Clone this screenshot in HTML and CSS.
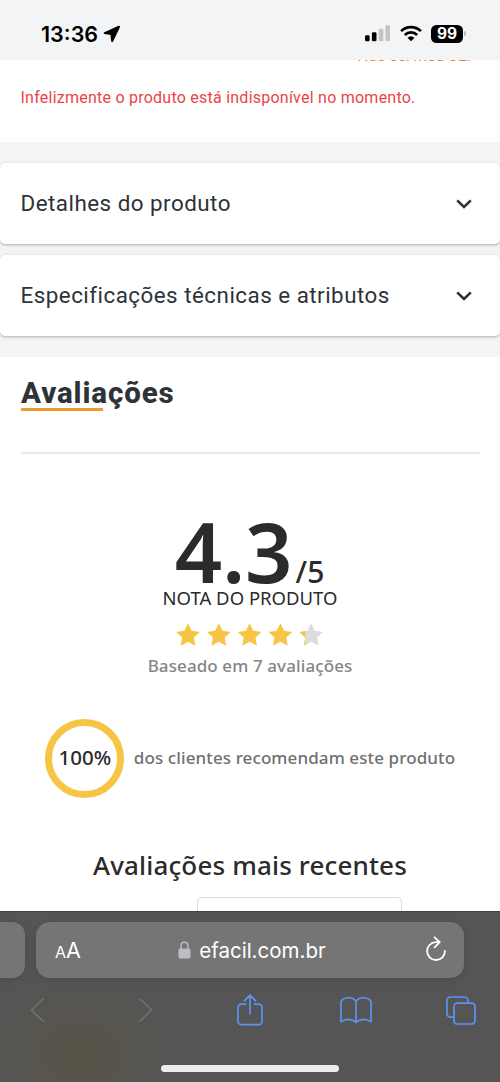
FILE: index.html
```html
<!DOCTYPE html>
<html lang="pt-BR">
<head>
<meta charset="utf-8">
<title>Avaliações</title>
<link rel="stylesheet" href="styles.css">
</head>
<body>
<header class="status">
  <div class="status-left">
    <span class="clock">13:36</span>
    <svg class="location" width="18" height="18" viewBox="0 0 18 18"><path d="M16 1.7 1.7 8.1l6.6.9.9 7Z" stroke="#000" stroke-width="2" stroke-linejoin="round"/></svg>
  </div>
  <div class="status-right">
    <svg width="26" height="17" viewBox="0 0 26 17"><rect x="0" y="10.3" width="4.6" height="6" rx="1.3"/><rect x="6.9" y="7.2" width="4.6" height="9.1" rx="1.3"/><g fill="#c3c4c5"><rect x="13.7" y="3.7" width="4.6" height="12.6" rx="1.3"/><rect x="20.4" y=".3" width="4.6" height="16" rx="1.3"/></g></svg>
    <svg class="wifi" width="22" height="17" viewBox="0 0 22 17"><g fill="none" stroke="#000" stroke-width="2.7"><path d="M1.1 6.1a14.3 14.3 0 0 1 19.8 0"/><path d="M4.8 9.9a9.1 9.1 0 0 1 12.4 0"/></g><path d="m11 16.3-3.5-3.5a5.2 5.2 0 0 1 7 0Z"/></svg>
    <span class="battery">99</span><i class="battery-tip"></i>
  </div>
</header>

<main class="page">
  <section class="notice">
    <a class="cep">Não sei meu CEP</a>
    <p class="unavailable">Infelizmente o produto está indisponível no momento.</p>
  </section>

  <section class="accordion">
    <div class="card"><h2>Detalhes do produto</h2><svg width="16" height="10" viewBox="0 0 16 10"><path d="m1.2 1.4 6.8 6.6 6.8-6.6"/></svg></div>
    <div class="card"><h2 class="long">Especificações técnicas e atributos</h2><svg width="16" height="10" viewBox="0 0 16 10"><path d="m1.2 1.4 6.8 6.6 6.8-6.6"/></svg></div>
  </section>

  <section class="reviews">
    <h1>Avaliações</h1>
    <div class="title-line"></div>
    <hr>
    <div class="score"><strong>4.3</strong><span>/5</span></div>
    <p class="score-label">NOTA DO PRODUTO</p>
    <svg class="stars" width="148" height="24" viewBox="0 0 148 24">
      <defs>
        <path id="star" d="m12 .3 3.7 7.4 8.1 1.2-5.9 5.6 1.5 8.2-7.4-3.9-7.4 3.9 1.5-8.2L.2 8.9l8.1-1.2Z"/>
        <clipPath id="part"><rect width="6.3" height="24"/></clipPath>
      </defs>
      <g fill="#f6c543"><use href="#star"/><use href="#star" x="30.8"/><use href="#star" x="61.6"/><use href="#star" x="92.4"/></g>
      <use href="#star" x="123.2" fill="#dcdcdc"/>
      <g transform="translate(123.2 0)"><use href="#star" fill="#f6c543" clip-path="url(#part)"/></g>
    </svg>
    <p class="based">Baseado em 7 avaliações</p>
    <div class="recommend"><span class="ring"><b>100%</b></span><span class="recommend-text">dos clientes recomendam este produto</span></div>
    <h3>Avaliações mais recentes</h3>
    <div class="select"></div>
  </section>
</main>

<footer class="toolbar">
  <div class="tabs">
    <div class="tab-prev"></div>
    <div class="address">
      <span class="aa"><small>A</small>A</span>
      <span class="host"><svg width="13" height="18" viewBox="0 0 13 18"><path d="M3 8V5.2C3 2.8 4.4 1.3 6.5 1.3S10 2.8 10 5.2V8" fill="none" stroke="#bebdc4" stroke-width="1.5"/><rect x=".5" y="7.4" width="12" height="10" rx="1.7" fill="#bebdc4"/></svg>efacil.com.br</span>
      <svg class="reload" width="22" height="26" viewBox="0 0 22 26"><path d="M14.7 6.2h-4A8.9 8.9 0 1 0 19.9 15M9.6 1.3l5.1 4.9-5.1 5.1"/></svg>
    </div>
  </div>
  <nav class="actions">
    <svg class="muted" width="14" height="24" viewBox="0 0 14 24"><path d="M13 1 1.3 12 13 23"/></svg>
    <svg class="muted next" width="14" height="24" viewBox="0 0 14 24"><path d="m1 1 11.7 11L1 23"/></svg>
    <svg class="share" width="26" height="32" viewBox="0 0 26 32"><path d="M8.4 10.2H4.3A3.3 3.3 0 0 0 1 13.5v13.9a3.3 3.3 0 0 0 3.3 3.3h17.4a3.3 3.3 0 0 0 3.3-3.3V13.5a3.3 3.3 0 0 0-3.3-3.3h-4.1M13 20V1.4M7.4 6.8 13 1.2l5.6 5.6"/></svg>
    <svg class="book" width="32" height="27" viewBox="0 0 32 27"><path d="M16 4.4C13-.2 5.7-.3 1.7 3.3Q1 4 1 5v19.7c4.2-3.2 11-3.4 15 .8 4-4.2 10.8-4 15-.8V5q0-1-.7-1.7C26.3-.3 19-.2 16 4.4v21.1"/></svg>
    <svg width="30" height="29" viewBox="0 0 30 29"><path d="M8 21.2H4.4A3.4 3.4 0 0 1 1 17.8V4.4A3.4 3.4 0 0 1 4.4 1h14.2A3.4 3.4 0 0 1 22 4.4v2.8"/><rect x="8" y="7.2" width="21" height="20.8" rx="3.3"/></svg>
  </nav>
  <div class="home"></div>
</footer>
</body>
</html>
```
FILE: styles.css
```css
* { box-sizing: border-box; }
body {
  margin: 0;
  width: 500px;
  height: 1082px;
  overflow: hidden;
  display: flex;
  flex-direction: column;
  background: #fff;
  font-family: "Noto Sans", "Open Sans", sans-serif;
  color: #2b2b2b;
}
h1, h2, h3, p { margin: 0; font-weight: 500; white-space: nowrap; }
svg { display: block; flex: none; }

.status {
  position: relative;
  z-index: 1;
  flex: none;
  height: 60px;
  padding: 7px 34px 0 41px;
  display: flex;
  align-items: center;
  justify-content: space-between;
  background: #f3f4f6;
  color: #000;
}
.status-left, .status-right { display: flex; align-items: center; }
.clock { font: 600 21.5px/26px Inter, sans-serif; }
.location { margin-left: 5px; }
.wifi { margin-left: 9px; }
.battery {
  width: 32px;
  height: 18px;
  margin-left: 9px;
  border-radius: 5.5px;
  background: #000;
  color: #fff;
  font: 700 15.5px/18px Inter, sans-serif;
  text-align: center;
}
.battery-tip {
  width: 2px;
  height: 5px;
  margin-left: 1px;
  border-radius: 0 2px 2px 0;
  background: #b5b6b8;
}

.page { flex: none; height: 851px; }
.notice { height: 82px; padding: 0 20.5px; display: flex; flex-direction: column; font-family: Roboto, sans-serif; }
.cep {
  margin: -15px 3px 0 0;
  text-align: right;
  font-size: 15.5px;
  line-height: 22px;
  color: #ee7e33;
}
.unavailable {
  margin-top: 21px;
  font-size: 16px;
  line-height: 20px;
  font-weight: 400;
  letter-spacing: .24px;
  color: #ea4447;
}
.accordion {
  height: 215px;
  padding-top: 21px;
  display: flex;
  flex-direction: column;
  gap: 11px;
  background: #f3f4f6;
}
.card {
  height: 81px;
  padding: 0 28px 0 20.5px;
  display: flex;
  align-items: center;
  justify-content: space-between;
  border-radius: 5px;
  background: #fff;
  box-shadow: 0 1px 3px rgba(0, 0, 0, .3);
}
.card h2 {
  padding-bottom: 1px;
  font: 400 22.4px/28px Roboto, sans-serif;
  letter-spacing: .48px;
  color: #2d3338;
}
.card path { fill: none; stroke: #2b3034; stroke-width: 2.5; }

.reviews { padding: 0 20px; display: flex; flex-direction: column; align-items: center; }
.reviews h1 {
  align-self: flex-start;
  margin: 19px 0 0 1px;
  font: 800 29.5px/34px Roboto, sans-serif;
  letter-spacing: .9px;
  color: #2e3338;
}
.title-line { align-self: flex-start; width: 82px; height: 3px; margin: -2px 0 0 1px; background: #f0992e; }
.reviews hr { width: 459px; height: 2px; margin: 41px 0 0; border: 0; background: #e9e9e9; }
.score {
  height: 132px;
  margin-right: 1px;
  display: flex;
  align-items: baseline;
  gap: 3px;
  line-height: 194px;
}
.score strong { font-size: 83px; font-weight: 600; }
.score span { font-size: 30px; font-weight: 500; }
.score-label { font-size: 18.5px; line-height: 24px; font-weight: 400; }
.stars { margin-top: 13px; }
.based { margin-top: 6px; font-size: 17px; line-height: 26px; letter-spacing: .1px; color: #858585; }
.recommend { margin-top: 40px; display: flex; align-items: center; gap: 10px; }
.ring {
  width: 79px;
  height: 79px;
  border: 7px solid #f6c543;
  border-radius: 50%;
  display: grid;
  place-items: center;
}
.ring b { padding: 0 0 3px 1px; font-size: 20.5px; font-weight: 500; }
.recommend-text { padding-bottom: 2px; font-size: 17px; font-weight: 500; letter-spacing: .1px; color: #707070; white-space: nowrap; }
.reviews h3 { margin-top: 48px; font-size: 26px; line-height: 38px; letter-spacing: .15px; }
.select {
  width: 205px;
  height: 50px;
  margin: 13px 0 0 99px;
  border: 1.5px solid #dadada;
  border-radius: 5px;
}

.toolbar {
  position: relative;
  z-index: 1;
  flex: none;
  height: 171px;
  padding-top: 10px;
  border-top: 1px solid #444;
  background: radial-gradient(ellipse 95px 70px at 80px 140px, #585447, rgba(88, 84, 71, 0)), #555;
}
.tabs { display: flex; gap: 11px; }
.tab-prev, .address {
  height: 56px;
  background: #757575;
  box-shadow: 0 2px 10px rgba(0, 0, 0, .13);
}
.tab-prev { width: 25px; border-radius: 0 13px 13px 0; }
.address {
  width: 428px;
  padding: 0 17px 0 19px;
  display: flex;
  align-items: center;
  justify-content: space-between;
  border-radius: 14px;
  color: #fff;
  font-family: Inter, sans-serif;
}
.aa { font-size: 21.5px; }
.aa small { font-size: 16px; }
.host { margin-right: 2px; display: flex; align-items: center; gap: 8px; font-size: 20.5px; }
.reload { margin-bottom: 2px; }
.reload path { fill: none; stroke: #fff; stroke-width: 1.8; stroke-linecap: round; stroke-linejoin: round; }
.actions {
  width: 530px;
  height: 64px;
  margin-left: -16px;
  display: grid;
  grid-template-columns: repeat(5, 1fr);
  align-items: center;
  justify-items: center;
}
.actions .next { margin-left: 5px; }
.actions .share { margin-left: 2px; }
.actions .book { margin-left: 1px; margin-top: 1px; }
.actions path, .actions rect { fill: none; stroke: #5b93f5; stroke-width: 1.7; stroke-linecap: round; stroke-linejoin: round; }
.actions .muted path { stroke: #717171; }
.home { width: 178px; height: 7px; margin: 23px auto 0; border-radius: 4px; background: #ededed; }
```
